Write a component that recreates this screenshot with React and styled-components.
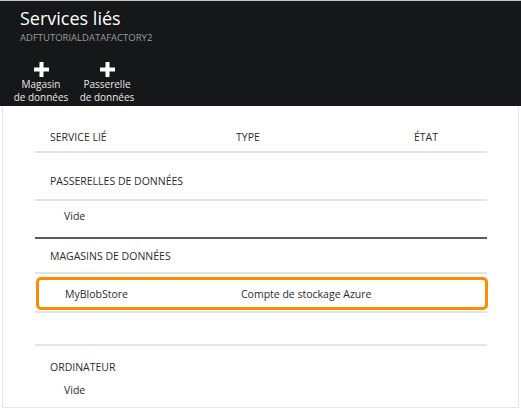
import React from "react";
import styled, { createGlobalStyle } from "styled-components";

const GlobalStyle = createGlobalStyle`
  html, body {
    margin: 0;
    padding: 0;
    background: #fff;
  }
  body {
    font-family: "Open Sans", "Noto Sans", sans-serif;
    color: #2b2b2b;
  }
`;

const Page = styled.div`
  width: 521px;
  height: 409px;
  overflow: hidden;
`;

const Header = styled.header`
  height: 106px;
  box-sizing: border-box;
  background: #161719;
  border-top: 1px solid #c4c4c4;
  padding: 5px 0 0 20px;
`;

const Title = styled.h1`
  margin: 0;
  font-size: 18px;
  line-height: 24px;
  font-weight: 400;
  color: #fff;
`;

const Subtitle = styled.div`
  font-size: 9.5px;
  line-height: 12px;
  margin-top: 2px;
  color: #9b9b9b;
`;

const Toolbar = styled.div`
  display: flex;
  gap: 2px;
  margin: 18px 0 0 -11px;
`;

const ToolButton = styled.button`
  width: 64px;
  padding: 0;
  border: 0;
  background: none;
  display: flex;
  flex-direction: column;
  align-items: center;
  color: #e8e8e8;
  font-family: inherit;
  font-size: 10px;
  line-height: 13px;
  cursor: pointer;

  svg {
    display: block;
    margin-bottom: 1px;
  }
`;

const Body = styled.section`
  height: 302px;
  box-sizing: border-box;
  margin: 0 2px 0 2px;
  border: 1px solid #e6e6e6;
  border-top: 0;
  padding: 0 31px 0 32px;
`;

const Row = styled.div`
  box-sizing: border-box;
  height: ${(p) => p.$h}px;
  padding-top: ${(p) => p.$pt}px;
  border-bottom: ${(p) =>
    p.$line === "dark" ? "2px solid #5a5a5a" : p.$line ? "2px solid #e4e4e4" : "0"};
  font-size: 10.5px;
  line-height: 14px;
`;

const Columns = styled.div`
  display: grid;
  grid-template-columns: 186px 178px 1fr;
  padding-left: 15px;
`;

const SectionTitle = styled.div`
  padding-left: 15px;
`;

const Empty = styled.div`
  padding-left: 29px;
`;

const SelectedWrap = styled.div`
  box-sizing: border-box;
  height: 39px;
  padding: 3px 0 1px;
  border-bottom: 2px solid #e4e4e4;
`;

const SelectedItem = styled.div`
  box-sizing: border-box;
  height: 33px;
  margin: 0 -1px 0 1px;
  border: 3px solid #ff8c00;
  border-radius: 5px;
  display: grid;
  grid-template-columns: 176px 1fr;
  align-items: center;
  padding-left: 26px;
  font-size: 10.5px;
  line-height: 14px;
`;

const Plus = () => (
  <svg width="15" height="15" viewBox="0 0 15 15">
    <path d="M5.5 0h4v5.5h5.5v4h-5.5v5.5h-4v-5.5h-5.5v-4h5.5z" fill="#fff" />
  </svg>
);

export default function App() {
  return (
    <>
      <GlobalStyle />
      <Page>
        <Header>
          <Title>Services liés</Title>
          <Subtitle>ADFTUTORIALDATAFACTORY2</Subtitle>
          <Toolbar>
            <ToolButton>
              <Plus />
              <span>Magasin</span>
              <span>de données</span>
            </ToolButton>
            <ToolButton>
              <Plus />
              <span>Passerelle</span>
              <span>de données</span>
            </ToolButton>
          </Toolbar>
        </Header>
        <Body>
          <Row $h={47} $pt={24} $line>
            <Columns>
              <span>SERVICE LIÉ</span>
              <span>TYPE</span>
              <span>ÉTAT</span>
            </Columns>
          </Row>
          <Row $h={48} $pt={21} $line>
            <SectionTitle>PASSERELLES DE DONNÉES</SectionTitle>
          </Row>
          <Row $h={38} $pt={8} $line="dark">
            <Empty>Vide</Empty>
          </Row>
          <Row $h={35} $pt={10} $line>
            <SectionTitle>MAGASINS DE DONNÉES</SectionTitle>
          </Row>
          <SelectedWrap>
            <SelectedItem>
              <span>MyBlobStore</span>
              <span>Compte de stockage Azure</span>
            </SelectedItem>
          </SelectedWrap>
          <Row $h={33} $pt={0} $line />
          <Row $h={34} $pt={14}>
            <SectionTitle>ORDINATEUR</SectionTitle>
          </Row>
          <Row $h={20} $pt={3}>
            <Empty>Vide</Empty>
          </Row>
        </Body>
      </Page>
    </>
  );
}
